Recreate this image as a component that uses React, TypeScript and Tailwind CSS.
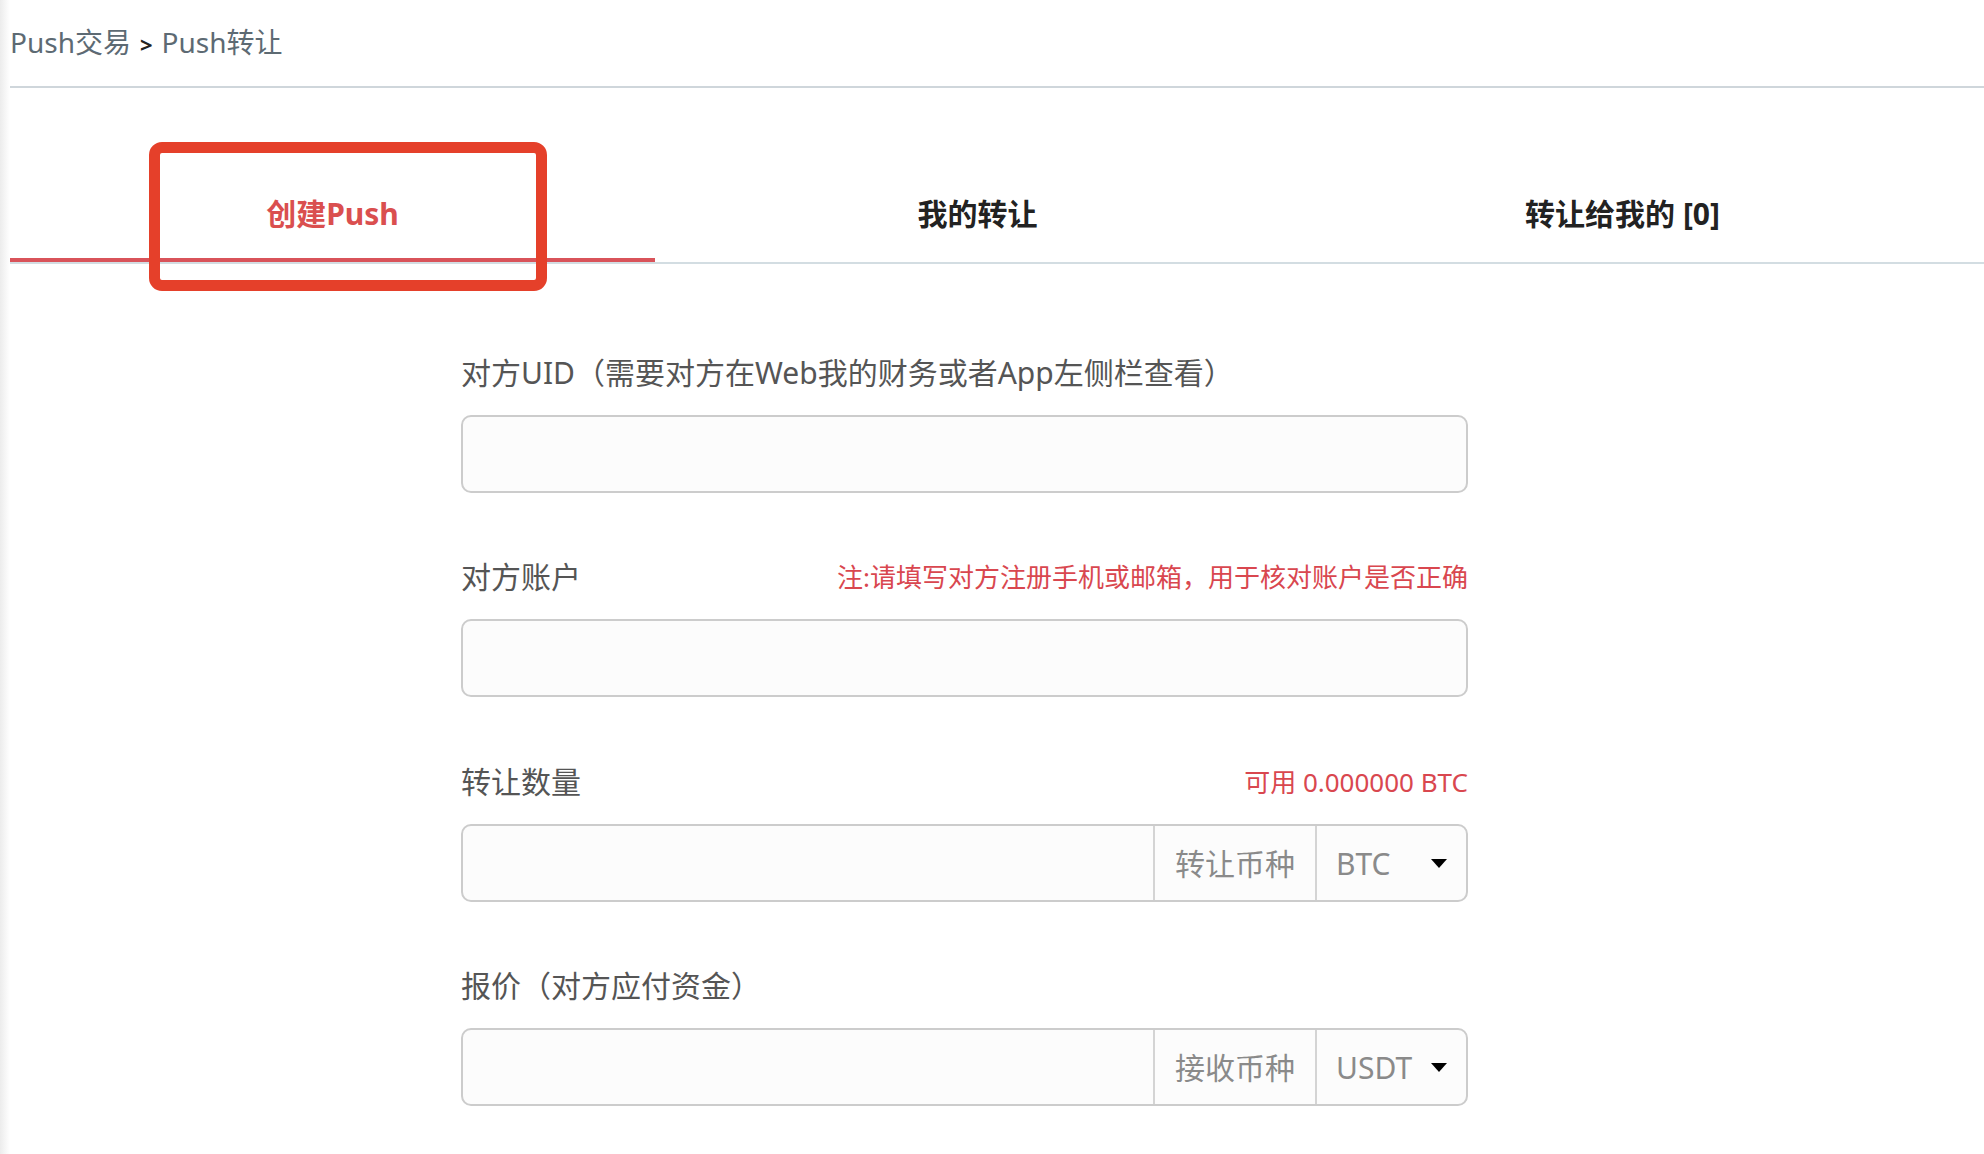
import React from "react";

const tabs = [
  { label: "创建Push", active: true },
  { label: "我的转让", active: false },
  { label: "转让给我的 [0]", active: false },
];

function Caret() {
  return (
    <span className="block w-0 h-0 border-l-[8px] border-r-[8px] border-t-[9px] border-l-transparent border-r-transparent border-t-black" />
  );
}

function FieldLabel({ label, note }: { label: string; note?: string }) {
  return (
    <div className="flex h-[40px] items-center justify-between">
      <span className="text-[30px] leading-[40px] text-[#555555]">{label}</span>
      {note && <span className="text-[26px] leading-[40px] text-[#d9474f]">{note}</span>}
    </div>
  );
}

function PlainInput() {
  return (
    <input
      type="text"
      className="mt-[22px] block h-[78px] w-full rounded-[10px] border-2 border-[#cccccc] bg-[#fcfcfc] px-4 text-[28px] outline-none"
    />
  );
}

function AddonInput({ addon, coin }: { addon: string; coin: string }) {
  return (
    <div className="mt-[22px] flex h-[78px] w-full overflow-hidden rounded-[10px] border-2 border-[#cccccc] bg-[#fcfcfc]">
      <input type="text" className="min-w-0 flex-1 bg-transparent px-4 text-[28px] outline-none" />
      <div className="flex w-[162px] items-center justify-center border-l-2 border-[#d4d4d4] text-[30px] text-[#8a8a8a]">
        {addon}
      </div>
      <div className="flex w-[151px] items-center justify-between border-l-2 border-[#d4d4d4] pl-[19px] pr-[19px] text-[30px] text-[#8a8a8a]">
        <span>{coin}</span>
        <Caret />
      </div>
    </div>
  );
}

export default function App() {
  return (
    <div className="flex min-h-[1154px] bg-white font-['Noto_Sans','Noto_Sans_CJK_SC',sans-serif]">
      <div className="w-[10px] bg-gradient-to-r from-[#ececec] to-white" />

      <div className="relative flex-1">
        <div className="h-[88px] border-b-2 border-[#cfd6db] pt-[23px] text-[28px] leading-[38px] text-[#5d6a73]">
          Push交易
          <span className="mx-[9px] text-[22px] font-bold text-[#222222]">&gt;</span>
          Push转让
        </div>

        <div className="mt-[80px] flex border-b-2 border-[#d3dde2]">
          {tabs.map((tab) => (
            <div
              key={tab.label}
              className={`flex h-[94px] w-[645px] items-center justify-center border-b-4 text-[30px] font-bold ${
                tab.active ? "border-[#d9535a] text-[#da4f4f]" : "border-transparent text-[#222222]"
              }`}
            >
              {tab.label}
            </div>
          ))}
        </div>

        {/* annotation box round the active tab */}
        <div className="absolute left-[139px] top-[142px] h-[149px] w-[398px] rounded-[13px] border-[11px] border-[#e5402a]" />

        <div className="ml-[451px] mt-[89px] w-[1007px]">
          <div className="mb-[64px]">
            <FieldLabel label="对方UID（需要对方在Web我的财务或者App左侧栏查看）" />
            <PlainInput />
          </div>

          <div className="mb-[65px]">
            <FieldLabel label="对方账户" note="注:请填写对方注册手机或邮箱，用于核对账户是否正确" />
            <PlainInput />
          </div>

          <div className="mb-[64px]">
            <FieldLabel label="转让数量" note="可用 0.000000 BTC" />
            <AddonInput addon="转让币种" coin="BTC" />
          </div>

          <div className="mb-[64px]">
            <FieldLabel label="报价（对方应付资金）" />
            <AddonInput addon="接收币种" coin="USDT" />
          </div>
        </div>
      </div>
    </div>
  );
}
